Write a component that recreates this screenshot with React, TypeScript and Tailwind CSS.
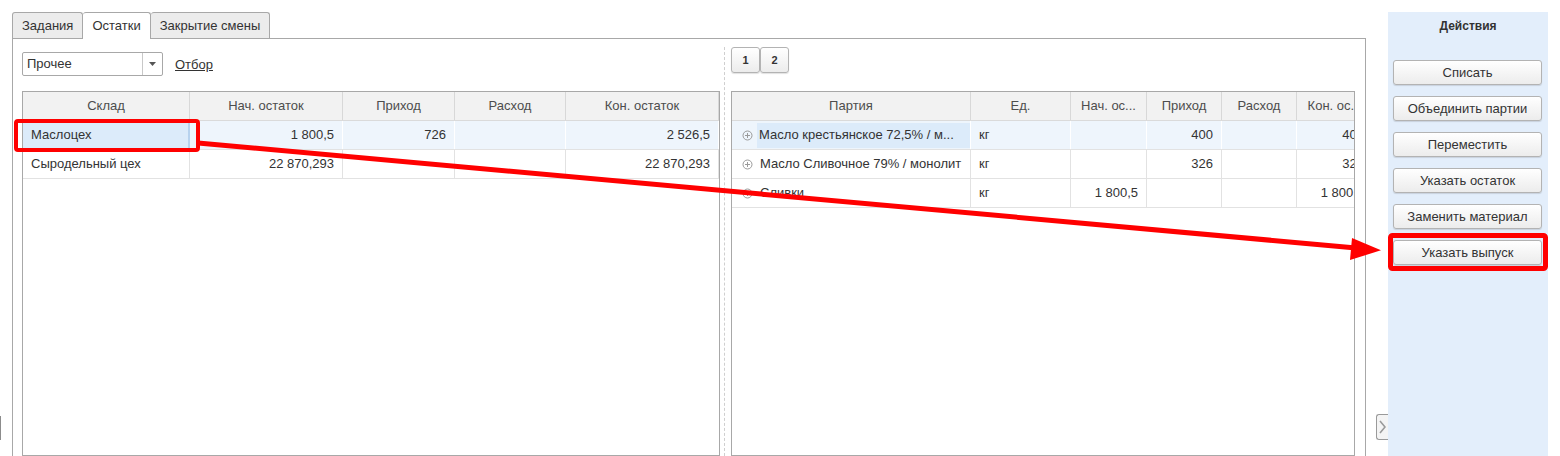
import React from "react";

type Cell = { text?: string; align?: "left" | "right"; plus?: boolean; selected?: boolean };

const leftCols = ["w-[167px]", "w-[153px]", "w-[112px]", "w-[111px]", "w-[153px]"];
const leftHead = ["Склад", "Нач. остаток", "Приход", "Расход", "Кон. остаток"];
const leftRows: Cell[][] = [
  [{ text: "Маслоцех", selected: true }, { text: "1 800,5", align: "right" }, { text: "726", align: "right" }, {}, { text: "2 526,5", align: "right" }],
  [{ text: "Сыродельный цех" }, { text: "22 870,293", align: "right" }, {}, {}, { text: "22 870,293", align: "right" }],
];

const rightCols = ["w-[239px]", "w-[100px]", "w-[76px]", "w-[75px]", "w-[75px]", "w-[76px]"];
const rightHead = ["Партия", "Ед.", "Нач. ос...", "Приход", "Расход", "Кон. ос..."];
const rightRows: Cell[][] = [
  [{ text: "Масло крестьянское 72,5% / м...", plus: true, selected: true }, { text: "кг" }, {}, { text: "400", align: "right" }, {}, { text: "400", align: "right" }],
  [{ text: "Масло Сливочное 79% / монолит", plus: true }, { text: "кг" }, {}, { text: "326", align: "right" }, {}, { text: "326", align: "right" }],
  [{ text: "Сливки", plus: true }, { text: "кг" }, { text: "1 800,5", align: "right" }, {}, {}, { text: "1 800,5", align: "right" }],
];

const actions = ["Списать", "Объединить партии", "Переместить", "Указать остаток", "Заменить материал", "Указать выпуск"];

const PlusIcon = () => (
  <svg width="11" height="11" viewBox="0 0 11 11" className="shrink-0">
    <circle cx="5.5" cy="5.5" r="4.5" fill="none" stroke="#9a9a9a" strokeWidth="1" />
    <path d="M3 5.5h5M5.5 3v5" stroke="#9a9a9a" strokeWidth="1" />
  </svg>
);

function Grid({ cols, head, rows }: { cols: string[]; head: string[]; rows: Cell[][] }) {
  return (
    <div className="flex-1 border border-[#a8a8a8] overflow-hidden bg-white">
      <div className="flex h-[29px] bg-[#f2f2f2] border-b border-[#dadada]">
        {head.map((h, i) => (
          <div
            key={i}
            className={`${cols[i]} shrink-0 flex items-center justify-center whitespace-nowrap overflow-hidden text-[#4d4d4d] border-r border-[#d8d8d8]`}
          >
            {h}
          </div>
        ))}
      </div>
      {rows.map((row, r) => (
        <div key={r} className={`flex h-[29px] border-b border-[#e2e2e2] ${r === 0 ? "bg-[#eef5fc]" : "bg-white"}`}>
          {row.map((c, i) => (
            <div
              key={i}
              className={`${cols[i]} shrink-0 flex items-center overflow-hidden whitespace-nowrap border-r ${r === 0 ? "border-white" : "border-[#e2e2e2]"} ${
                c.align === "right" ? "justify-end pr-[8px]" : c.plus ? "pl-[10px] gap-[4px]" : "pl-[8px]"
              } ${c.selected && !c.plus ? "bg-[#dcebfa] border-r-2 border-r-[#b7d2ee]" : ""}`}
            >
              {c.plus && <PlusIcon />}
              {c.plus && c.selected ? (
                <div className="h-[25px] flex-1 min-w-0 flex items-center bg-[#dcebfa] pl-[2px]">
                  <span className="whitespace-nowrap">{c.text}</span>
                </div>
              ) : (
                <span className={c.plus ? "pl-[3px]" : ""}>{c.text}</span>
              )}
            </div>
          ))}
        </div>
      ))}
    </div>
  );
}

const btn =
  "rounded-[3px] border border-[#b3b3b3] bg-gradient-to-b from-white to-[#ececec] shadow-[0_1px_1px_rgba(0,0,0,0.12)] text-[#333]";

export default function App() {
  return (
    <div
      className="relative flex w-[1560px] h-[456px] overflow-hidden bg-white text-[13px] text-[#333]"
      style={{ fontFamily: '"Liberation Sans", Arial, sans-serif' }}
    >
      {/* left splitter mark */}
      <div className="w-[12px] shrink-0 pt-[416px]">
        <div className="w-px h-[24px] bg-[#8c8c8c]" />
      </div>

      {/* main tabs area */}
      <div className="w-[1354px] shrink-0 pt-[12px] flex flex-col">
        <div className="flex h-[26px] items-end">
          <div className="h-[26px] px-[9px] flex items-center bg-[#ececec] border border-b-0 border-[#a8a8a8] rounded-t-[3px]">Задания</div>
          <div className="h-[27px] px-[9px] flex items-center bg-white border-t border-r border-[#a8a8a8] rounded-t-[3px] -mb-px relative z-10">Остатки</div>
          <div className="h-[26px] px-[9px] flex items-center bg-[#ececec] border border-b-0 border-l-0 border-[#a8a8a8] rounded-t-[3px]">Закрытие смены</div>
        </div>
        <div className="flex-1 flex border border-b-0 border-[#a8a8a8] pl-[9px] pr-[10px]">
          {/* left section */}
          <div className="w-[698px] shrink-0 flex flex-col">
            <div className="h-[52px] pt-[13px] flex items-start">
              <div className="w-[141px] h-[24px] flex border border-[#a8a8a8] rounded-[2px] bg-white">
                <div className="flex-1 flex items-center pl-[4px]">Прочее</div>
                <div className="w-[20px] border-l border-[#c8c8c8] flex items-center justify-center">
                  <svg width="7" height="4" viewBox="0 0 7 4"><path d="M0 0h7L3.5 4z" fill="#555" /></svg>
                </div>
              </div>
              <a className="ml-[12px] mt-[3px] underline text-[#333]">Отбор</a>
            </div>
            <Grid cols={leftCols} head={leftHead} rows={leftRows} />
          </div>

          {/* separator */}
          <div className="w-[11px] shrink-0 flex justify-center pt-[8px]">
            <div className="w-0 border-l border-dashed border-[#cfcfcf] ml-[-3px]" />
          </div>

          {/* right section */}
          <div className="w-[624px] shrink-0 flex flex-col">
            <div className="h-[52px] pt-[8px] flex items-start">
              <div className={`${btn} w-[29px] h-[26px] flex items-center justify-center text-[11px] font-bold`}>1</div>
              <div className={`${btn} w-[29px] h-[26px] flex items-center justify-center text-[11px] font-bold`}>2</div>
            </div>
            <Grid cols={rightCols} head={rightHead} rows={rightRows} />
          </div>
        </div>
      </div>

      {/* collapse handle */}
      <div className="w-[22px] shrink-0 pt-[414px] pl-[10px]">
        <div className="w-[12px] h-[26px] border border-r-0 border-[#9a9a9a] rounded-l-[3px] bg-[#f4f4f4] flex items-center justify-center">
          <svg width="7" height="14" viewBox="0 0 7 14"><path d="M1 1l5 6-5 6" fill="none" stroke="#9a9a9a" strokeWidth="1.6" /></svg>
        </div>
      </div>

      {/* actions panel */}
      <div className="w-[160px] shrink-0 mt-[12px] bg-[#e3eefb] flex flex-col items-center">
        <div className="h-[27px] flex items-center font-bold text-[12px] text-[#333]">Действия</div>
        <div className="mt-[21px] flex flex-col gap-[11px] w-full pl-[5px] pr-[6px]">
          {actions.map((a) => (
            <div key={a} className={`${btn} h-[25px] flex items-center justify-center`}>
              {a}
            </div>
          ))}
        </div>
      </div>

      {/* annotations */}
      <svg className="absolute inset-0 pointer-events-none" width="1560" height="456">
        <rect x="16" y="121" width="182" height="29" rx="2" fill="none" stroke="#ff0000" strokeWidth="4" />
        <rect x="1390.5" y="235.5" width="155" height="33" rx="2" fill="none" stroke="#ff0000" strokeWidth="5" />
        <line x1="198" y1="143" x2="1356" y2="248" stroke="#ff0000" strokeWidth="5" />
        <path d="M1381 250.3L1352 238L1350 260z" fill="#ff0000" />
      </svg>
    </div>
  );
}
